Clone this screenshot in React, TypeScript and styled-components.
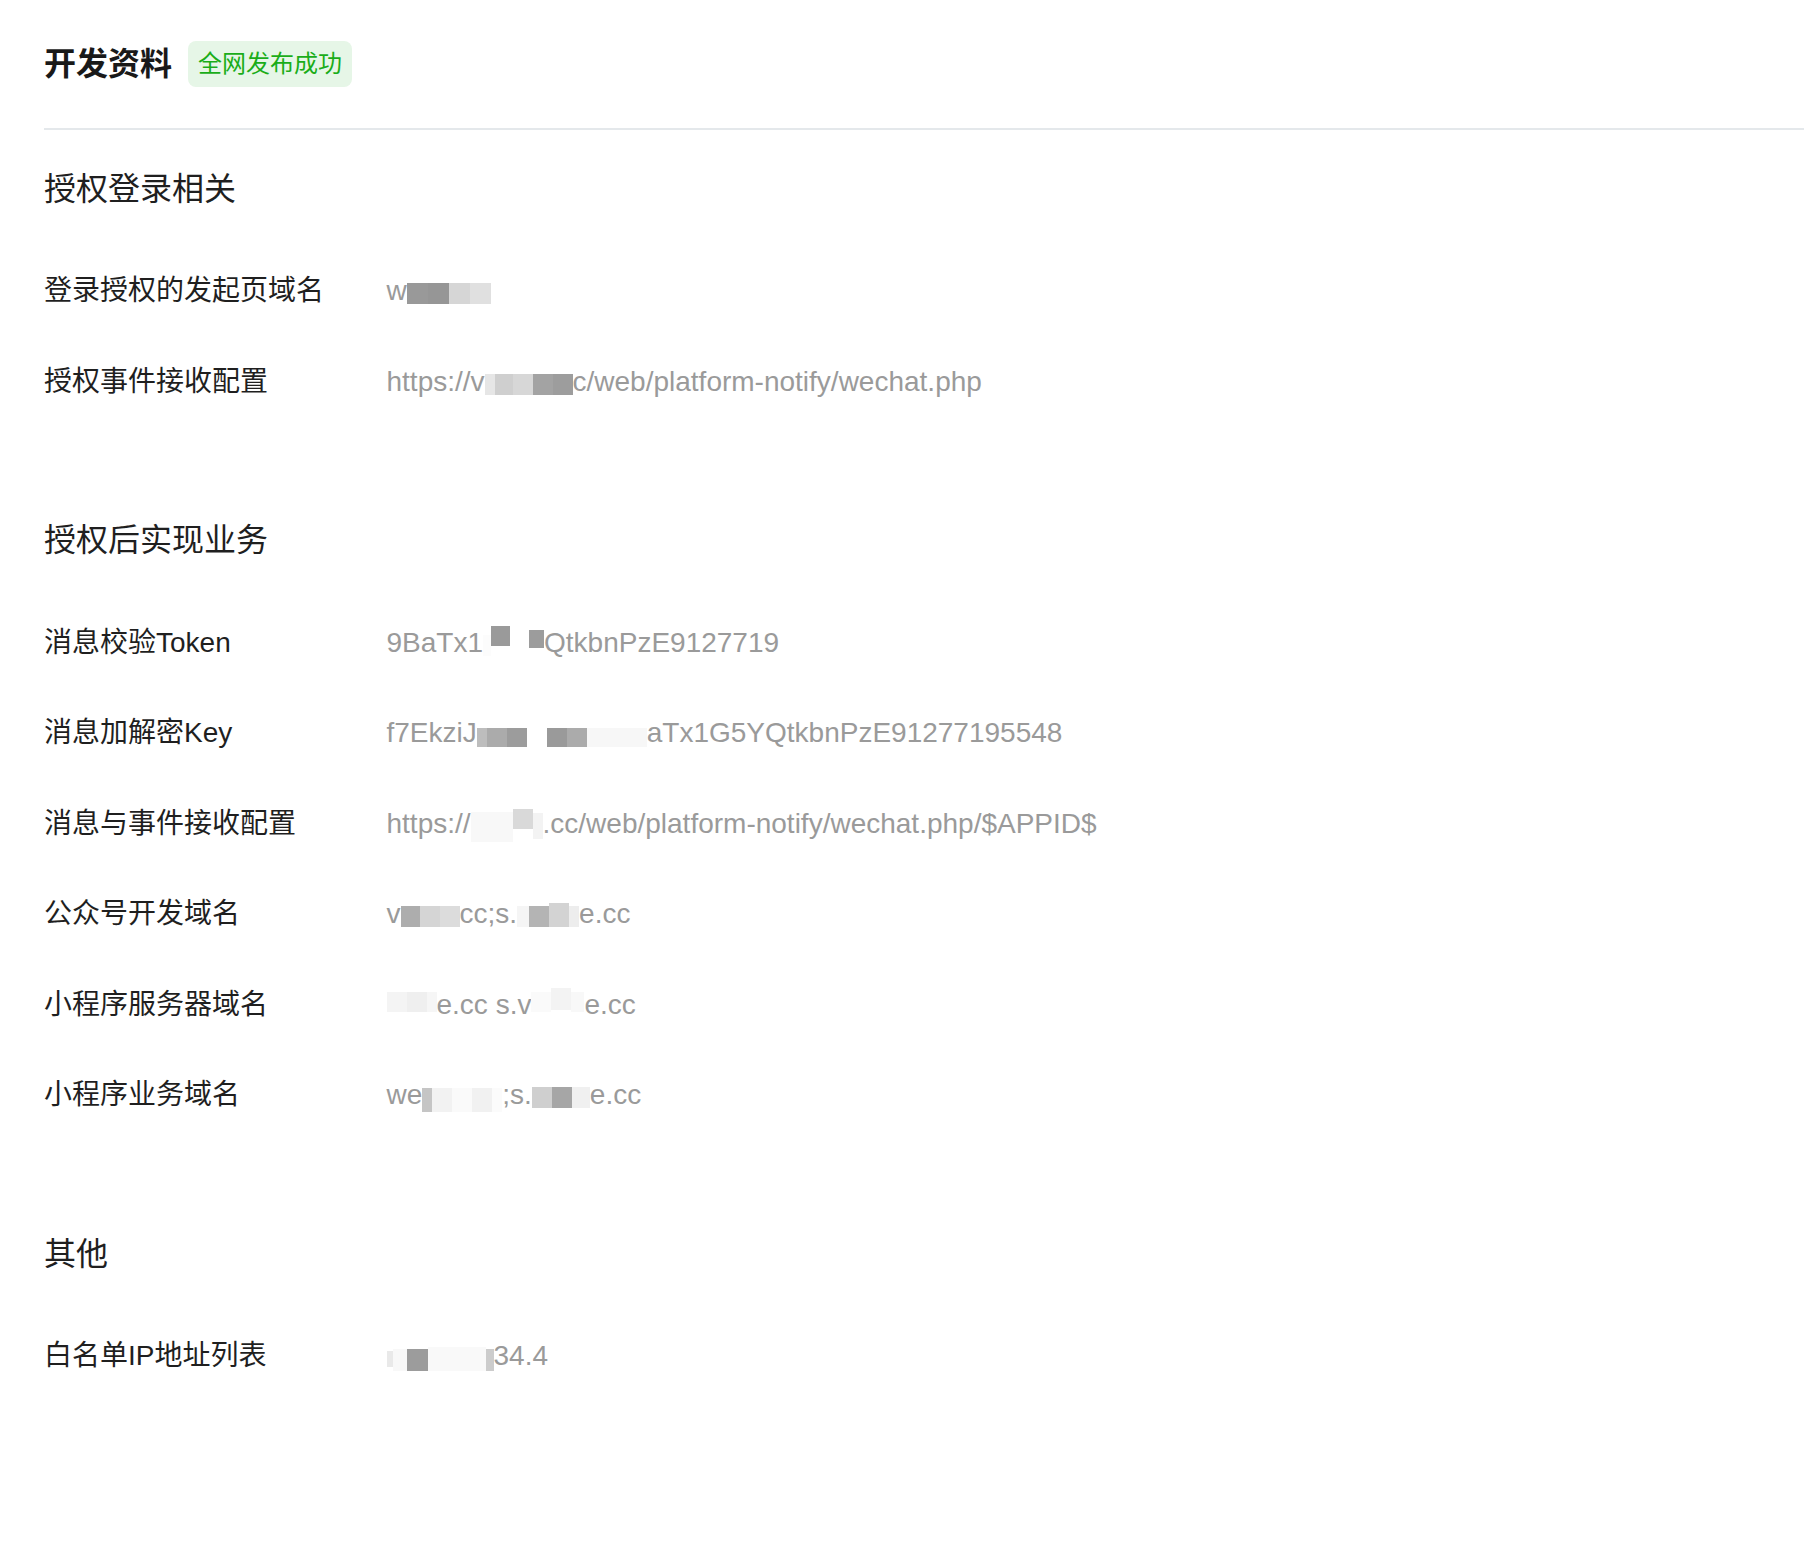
import React from 'react';
import styled, { createGlobalStyle } from 'styled-components';

const GlobalStyle = createGlobalStyle`
  html, body {
    margin: 0;
    padding: 0;
    background: #ffffff;
  }
  body {
    font-family: "Liberation Sans", "Noto Sans CJK SC", sans-serif;
    -webkit-font-smoothing: antialiased;
  }
`;

type Block = { c: string; w: number; h?: number; dy?: number };
type Segment = string | Block;

interface Field {
    label: string;
    value: Segment[];
}

interface Group {
    title: string;
    fields: Field[];
}

const groups: Group[] = [
    {
        title: '授权登录相关',
        fields: [
            {
                label: '登录授权的发起页域名',
                value: ['w', { c: '#999999', w: 21 }, { c: '#969696', w: 21 }, { c: '#d6d6d6', w: 21 }, { c: '#e0e0e0', w: 21 }],
            },
            {
                label: '授权事件接收配置',
                value: [
                    'https://v',
                    { c: '#e6e6e6', w: 10 },
                    { c: '#cfcfcf', w: 18 },
                    { c: '#d7d7d7', w: 20 },
                    { c: '#a3a3a3', w: 20 },
                    { c: '#9d9d9d', w: 20 },
                    'c/web/platform-notify/wechat.php',
                ],
            },
        ],
    },
    {
        title: '授权后实现业务',
        fields: [
            {
                label: '消息校验Token',
                value: [
                    '9BaTx1',
                    { c: '#fcfcfc', w: 8 },
                    { c: '#9a9a9a', w: 19, h: 20, dy: 6 },
                    { c: '#ffffff', w: 19 },
                    { c: '#9c9c9c', w: 15, h: 18, dy: 4 },
                    'QtkbnPzE9127719',
                ],
            },
            {
                label: '消息加解密Key',
                value: [
                    'f7EkziJ',
                    { c: '#bdbdbd', w: 10, h: 19, dy: -5 },
                    { c: '#ababab', w: 20, h: 19, dy: -5 },
                    { c: '#9c9c9c', w: 20, h: 19, dy: -5 },
                    { c: '#ffffff', w: 20, h: 19, dy: -5 },
                    { c: '#9a9a9a', w: 20, h: 19, dy: -5 },
                    { c: '#ababab', w: 20, h: 19, dy: -5 },
                    { c: '#f7f7f7', w: 60, h: 19, dy: -5 },
                    'aTx1G5YQtkbnPzE91277195548',
                ],
            },
            {
                label: '消息与事件接收配置',
                value: [
                    'https://',
                    { c: '#f8f8f8', w: 42, h: 30, dy: -9 },
                    { c: '#d9d9d9', w: 20, h: 20, dy: 4 },
                    { c: '#f3f3f3', w: 10, h: 26, dy: -6 },
                    '.cc/web/platform-notify/wechat.php/$APPID$',
                ],
            },
            {
                label: '公众号开发域名',
                value: [
                    'v',
                    { c: '#adadad', w: 19 },
                    { c: '#d5d5d5', w: 20 },
                    { c: '#dcdcdc', w: 20 },
                    'cc;s.',
                    { c: '#f5f5f5', w: 12 },
                    { c: '#b4b4b4', w: 20 },
                    { c: '#d3d3d3', w: 20, h: 24, dy: -4 },
                    { c: '#ededed', w: 10 },
                    'e.cc',
                ],
            },
            {
                label: '小程序服务器域名',
                value: [
                    { c: '#f4f4f4', w: 20, h: 20, dy: 2 },
                    { c: '#efefef', w: 20, h: 20, dy: 2 },
                    { c: '#f6f6f6', w: 10, h: 20, dy: 2 },
                    'e.cc s.v',
                    { c: '#fafafa', w: 20, h: 20, dy: 2 },
                    { c: '#f3f3f3', w: 20, h: 22, dy: 4 },
                    { c: '#f8f8f8', w: 13, h: 20, dy: 2 },
                    'e.cc',
                ],
            },
            {
                label: '小程序业务域名',
                value: [
                    'we',
                    { c: '#c5c5c5', w: 10, h: 24, dy: -8 },
                    { c: '#f2f2f2', w: 20, h: 24, dy: -8 },
                    { c: '#fafafa', w: 20, h: 24, dy: -8 },
                    { c: '#f1f1f1', w: 20, h: 24, dy: -8 },
                    { c: '#fbfbfb', w: 10, h: 24, dy: -8 },
                    ';s.',
                    { c: '#cfcfcf', w: 20 },
                    { c: '#a6a6a6', w: 20 },
                    { c: '#f0f0f0', w: 18 },
                    'e.cc',
                ],
            },
        ],
    },
    {
        title: '其他',
        fields: [
            {
                label: '白名单IP地址列表',
                value: [
                    { c: '#e9e9e9', w: 6, h: 16, dy: -2 },
                    { c: '#f8f8f8', w: 14, h: 22, dy: -6 },
                    { c: '#9c9c9c', w: 21, h: 22, dy: -6 },
                    { c: '#f9f9f9', w: 58, h: 24, dy: -6 },
                    { c: '#cccccc', w: 8, h: 22, dy: -6 },
                    '34.4',
                ],
            },
        ],
    },
];

const Page = styled.div`
  padding: 0 0 0 44px;
  min-height: 1556px;
  box-sizing: border-box;
  background: #ffffff;
`;

const Header = styled.div`
  display: flex;
  align-items: center;
  gap: 16px;
  padding: 41px 0 41px;
  border-bottom: 2px solid #e4e8eb;
`;

const PageTitle = styled.h1`
  margin: 0;
  font-family: "Liberation Sans", "Noto Sans CJK SC", sans-serif;
  font-size: 32px;
  line-height: 46px;
  font-weight: 600;
  color: #191919;
`;

const Badge = styled.span`
  display: inline-block;
  padding: 8px 10px;
  border-radius: 8px;
  background: #e6f6e7;
  color: #1aad19;
  font-family: "Liberation Sans", "Noto Sans CJK SC", sans-serif;
  font-size: 24px;
  line-height: 30px;
`;

const Section = styled.section<{ $first?: boolean }>`
  padding-top: ${(p) => (p.$first ? '36.5px' : '91.25px')};
`;

const SectionTitle = styled.h2`
  margin: 0;
  font-family: "Liberation Sans", "Noto Sans CJK SC", sans-serif;
  font-size: 32px;
  line-height: 44px;
  font-weight: 400;
  color: #1f1f1f;
`;

const FieldList = styled.div`
  margin-top: 35.25px;
  display: flex;
  flex-direction: column;
`;

const Row = styled.div`
  display: grid;
  grid-template-columns: 342.5px 1fr;
  align-items: center;
  height: 90.5px;
`;

const Label = styled.div`
  font-family: "Liberation Sans", "Noto Sans CJK SC", sans-serif;
  font-size: 28px;
  line-height: 40px;
  color: #1f1f1f;
  white-space: nowrap;
`;

const Value = styled.div`
  font-family: "Liberation Sans", "Noto Sans CJK SC", sans-serif;
  font-size: 28px;
  line-height: 40px;
  color: #9a9a9a;
  white-space: nowrap;
`;

const Mosaic = styled.span<{ $c: string; $w: number; $h: number; $dy: number }>`
  display: inline-block;
  width: ${(p) => p.$w}px;
  height: ${(p) => p.$h}px;
  background: ${(p) => p.$c};
  vertical-align: ${(p) => p.$dy}px;
`;

const renderValue = (segments: Segment[]) =>
    segments.map((s, i) =>
        typeof s === 'string' ? (
            <React.Fragment key={i}>{s}</React.Fragment>
        ) : (
            <Mosaic key={i} $c={s.c} $w={s.w} $h={s.h ?? 21} $dy={s.dy ?? -4} />
        )
    );

const App: React.FC = () => (
    <>
        <GlobalStyle />
        <Page>
            <Header>
                <PageTitle>开发资料</PageTitle>
                <Badge>全网发布成功</Badge>
            </Header>
            {groups.map((g, gi) => (
                <Section key={g.title} $first={gi === 0}>
                    <SectionTitle>{g.title}</SectionTitle>
                    <FieldList>
                        {g.fields.map((f) => (
                            <Row key={f.label}>
                                <Label>{f.label}</Label>
                                <Value>{renderValue(f.value)}</Value>
                            </Row>
                        ))}
                    </FieldList>
                </Section>
            ))}
        </Page>
    </>
);

export default App;
